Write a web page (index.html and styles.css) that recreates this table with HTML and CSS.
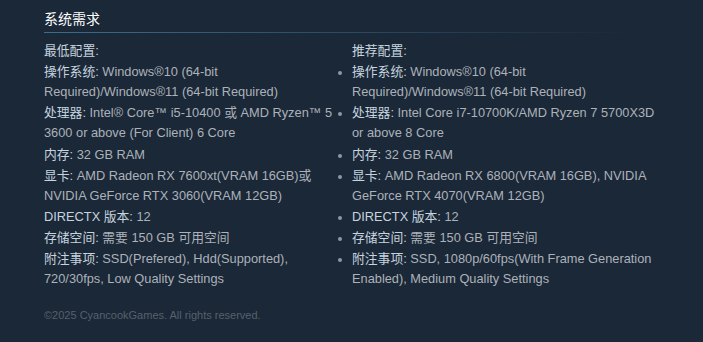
FILE: index.html
```html
<!DOCTYPE html>
<html lang="zh-CN">
<head>
    <meta charset="UTF-8">
    <meta name="viewport" content="width=device-width, initial-scale=1.0">
    <title>系统需求</title>
    <link rel="stylesheet" href="styles.css">
</head>
<body>
    <div class="sysreq">
        <h2 class="sysreq-title">系统需求</h2>

        <div class="sysreq-cols">
            <!-- 最低配置 -->
            <div class="sysreq-col left">
                <ul>
                    <li class="sysreq-head"><strong>最低配置:</strong></li>
                    <li><strong>操作系统:</strong> Windows®10 (64-bit Required)/Windows®11 (64-bit Required)</li>
                    <li><strong>处理器:</strong> Intel® Core™ i5-10400 或 AMD Ryzen™ 5 3600 or above (For Client) 6 Core</li>
                    <li><strong>内存:</strong> 32 GB RAM</li>
                    <li><strong>显卡:</strong> AMD Radeon RX 7600xt(VRAM 16GB)或 NVIDIA GeForce RTX 3060(VRAM 12GB)</li>
                    <li><strong>DIRECTX 版本:</strong> 12</li>
                    <li><strong>存储空间:</strong> 需要 150 GB 可用空间</li>
                    <li><strong>附注事项:</strong> SSD(Prefered), Hdd(Supported), 720/30fps, Low Quality Settings</li>
                </ul>
            </div>
            <!-- 推荐配置 -->
            <div class="sysreq-col right">
                <ul>
                    <li class="sysreq-head"><strong>推荐配置:</strong></li>
                    <li><strong>操作系统:</strong> Windows®10 (64-bit Required)/Windows®11 (64-bit Required)</li>
                    <li><strong>处理器:</strong> Intel Core i7-10700K/AMD Ryzen 7 5700X3D or above 8 Core</li>
                    <li><strong>内存:</strong> 32 GB RAM</li>
                    <li><strong>显卡:</strong> AMD Radeon RX 6800(VRAM 16GB), NVIDIA GeForce RTX 4070(VRAM 12GB)</li>
                    <li><strong>DIRECTX 版本:</strong> 12</li>
                    <li><strong>存储空间:</strong> 需要 150 GB 可用空间</li>
                    <li><strong>附注事项:</strong> SSD, 1080p/60fps(With Frame Generation Enabled), Medium Quality Settings</li>
                </ul>
            </div>
        </div>

        <p class="copyright">©2025 CyancookGames. All rights reserved.</p>
    </div>
</body>
</html>
```

FILE: styles.css
```css
body {
    margin: 0;
    background: #1b2838;
    font-family: "Liberation Sans", Arial, "Noto Sans CJK SC", sans-serif;
    color: #acb2b8;
}

.sysreq {
    width: 616px;
    padding: 9px 0 0 44px;
}

.sysreq-title {
    margin: 0 0 8px;
    padding-bottom: 3px;
    font-size: 14px;
    font-weight: normal;
    line-height: 20px;
    color: #ffffff;
    border-bottom: 1px solid;
    border-image: linear-gradient(to right, #3d6c8c 0%, #2b4a63 50%, rgba(43, 74, 99, 0) 95%) 1;
}

.sysreq-cols {
    display: grid;
    grid-template-columns: 296px 1fr;
}

.sysreq-col ul {
    margin: 0;
    padding: 0;
    font-size: 12.8px;
    line-height: 20px;
}

.sysreq-col li {
    margin-bottom: 1.2px;
}

.sysreq-col strong {
    font-weight: normal;
    color: #c6d4df;
}

.left ul {
    list-style: none;
}

.right ul {
    padding-left: 12px;
    list-style: disc;
}

.right li::marker {
    color: #8f98a0;
    font-size: 12px;
}

.right .sysreq-head {
    list-style: none;
}

.copyright {
    margin: 16px 0 0;
    font-size: 11px;
    line-height: 16px;
    color: #56616c;
}
```
